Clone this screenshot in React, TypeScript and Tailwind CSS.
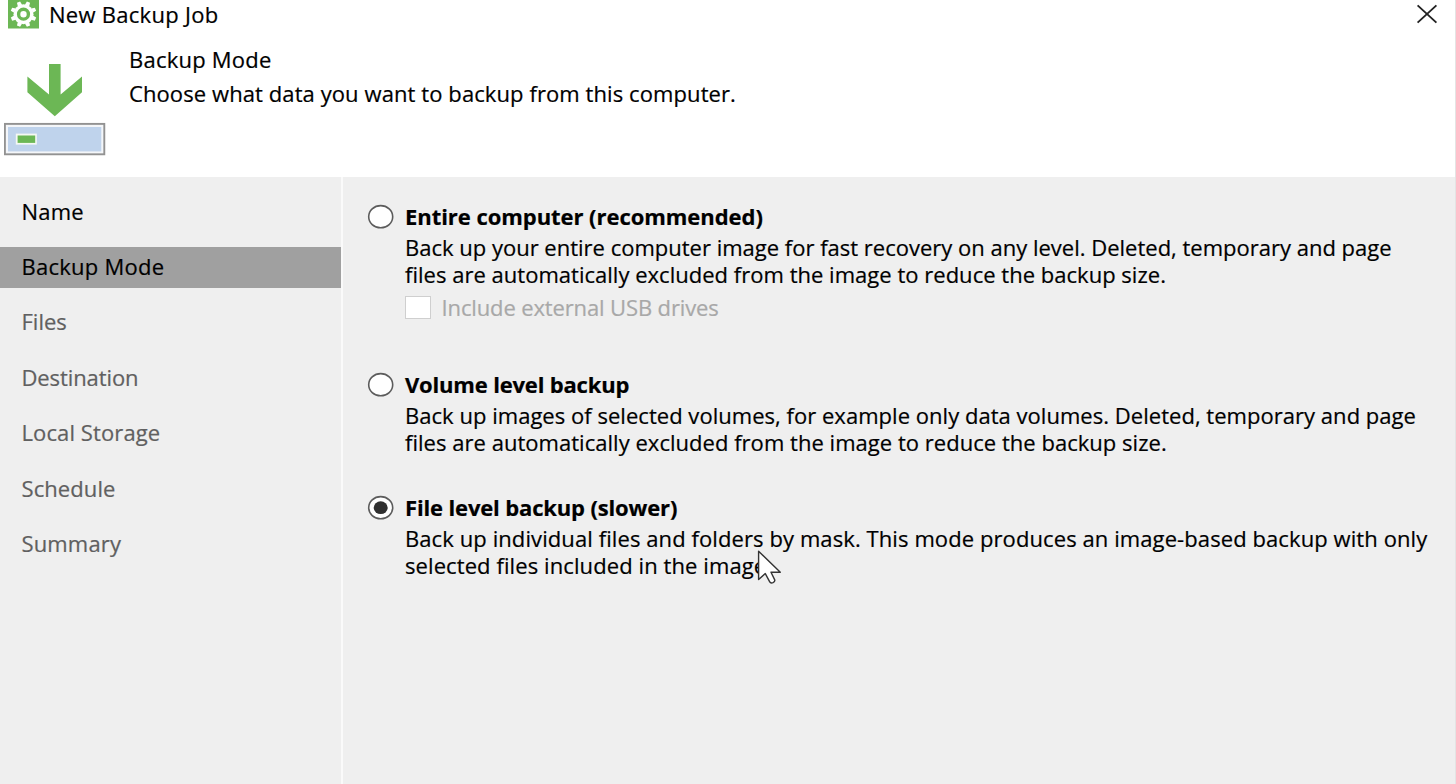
const STEPS = [
  { label: "Name", tone: "text-black tracking-[0.2px]" },
  { label: "Backup Mode", tone: "text-black tracking-[0.25px]", active: true },
  { label: "Files", tone: "text-[#606060] tracking-[0px]" },
  { label: "Destination", tone: "text-[#606060] tracking-[-0.1px]" },
  { label: "Local Storage", tone: "text-[#606060] tracking-[0.1px]" },
  { label: "Schedule", tone: "text-[#606060] tracking-[0.08px]" },
  { label: "Summary", tone: "text-[#606060] tracking-[0.15px]" },
];

const TEETH = [22.5, 67.5, 112.5, 157.5, 202.5, 247.5, 292.5, 337.5];

function GearIcon() {
  return (
    <svg width="31" height="29" viewBox="0 0 31 29" className="block shrink-0">
      <rect width="31" height="28.5" fill="#6cb755" />
      <g fill="#fff">
        {TEETH.map((angle) => (
          <path key={angle} d="M13.2 5 L13.8 1.2 H17.2 L17.8 5Z" transform={`rotate(${angle} 15.5 14.2)`} />
        ))}
        <circle cx="15.5" cy="14.2" r="10" />
      </g>
      <circle cx="15.5" cy="14.2" r="4.9" fill="none" stroke="#6cb755" strokeWidth="3.4" />
    </svg>
  );
}

function BackupIcon() {
  return (
    <svg width="102" height="94" viewBox="4 63 102 94" className="block shrink-0">
      <path d="M49 64 H60.6 V94.4 L82 76.6 V92.3 L54.8 116.2 L27.4 92.3 V76.6 L49 94.4Z" fill="#6cb755" />
      <rect x="4.9" y="123.9" width="99.4" height="30.4" fill="#f4f6f9" stroke="#929292" strokeWidth="1.9" />
      <rect x="8" y="127" width="93.3" height="24.4" fill="#bfd3ec" />
      <rect x="15.8" y="133.6" width="21" height="11" fill="#f5f8f3" />
      <rect x="17.6" y="135.5" width="17.6" height="7.4" fill="#6cb755" />
    </svg>
  );
}

function Radio({ checked = false }: { checked?: boolean }) {
  return (
    <svg width="27" height="25" viewBox="0 0 27 25" className="mt-px block shrink-0">
      <ellipse cx="13.7" cy="12.7" rx="12" ry="11.1" fill="#fff" stroke="#5c5c5c" strokeWidth="1.6" />
      {checked && <ellipse cx="13.7" cy="12.7" rx="7" ry="6.4" fill="#303030" />}
    </svg>
  );
}

export default function App() {
  return (
    <div className="flex h-[784px] w-[1456px] flex-col overflow-hidden border-r border-[#e4e4e4] bg-white font-['Open_Sans','Noto_Sans',sans-serif] text-[22px] text-black [-webkit-text-stroke:0.2px]">
      <header className="flex h-[177px] shrink-0 flex-col">
        <div className="flex h-[36px] items-start pl-2">
          <GearIcon />
          <h1 className="ml-[10px] leading-[29px] tracking-[0.28px]">New Backup Job</h1>
          <svg width="22" height="20" viewBox="0 0 22 20" className="mt-[4px] mr-[17px] ml-auto block">
            <path d="M1.6 1.4 L20.4 18.6 M20.4 1.4 L1.6 18.6" stroke="#222" strokeWidth="1.9" />
          </svg>
        </div>
        <div className="flex pl-1">
          <div className="pt-[27px]">
            <BackupIcon />
          </div>
          <div className="ml-[23px] pt-[6px] leading-[34px]">
            <h2 className="tracking-[0.22px]">Backup Mode</h2>
            <p className="tracking-[0.09px]">Choose what data you want to backup from this computer.</p>
          </div>
        </div>
      </header>

      <div className="flex min-h-0 flex-1 bg-[#efefef]">
        <nav className="w-[343px] shrink-0 border-r-2 border-[#fafafa] pt-[7px]">
          {STEPS.map((step) => (
            <div key={step.label} className="flex h-[55.4px] items-center">
              <div
                className={`flex h-[41px] w-full items-center pb-px pl-[21.5px] ${step.tone} ${step.active ? "bg-[#a0a0a0]" : ""}`}
              >
                {step.label}
              </div>
            </div>
          ))}
        </nav>

        <main className="flex-1 pt-[26px] pl-[24px] whitespace-nowrap">
          <section className="flex h-[168px]">
            <Radio />
            <div className="ml-[11px]">
              <h3 className="leading-[27px] font-bold tracking-[-0.05px]">Entire computer (recommended)</h3>
              <p className="mt-[4px] leading-[26.7px]">
                Back up your entire computer image for fast recovery on any level. Deleted, temporary and page
                <br />
                <span className="tracking-[0.02px]">
                  files are automatically excluded from the image to reduce the backup size.
                </span>
              </p>
              <div className="mt-[5.5px] flex items-center text-[#a8a8a8]">
                <span className="mt-[2px] h-[23px] w-[26px] border-[1.5px] border-[#cfcfcf] bg-white" />
                <span className="ml-[10.5px] pt-px leading-[27px] tracking-[-0.13px]">Include external USB drives</span>
              </div>
            </div>
          </section>

          <section className="flex h-[123px]">
            <Radio />
            <div className="ml-[11px]">
              <h3 className="leading-[27px] font-bold tracking-[-0.18px]">Volume level backup</h3>
              <p className="mt-[4px] leading-[26.7px] tracking-[0.03px]">
                Back up images of selected volumes, for example only data volumes. Deleted, temporary and page
                <br />
                files are automatically excluded from the image to reduce the backup size.
              </p>
            </div>
          </section>

          <section className="flex">
            <Radio checked />
            <div className="ml-[11px]">
              <h3 className="leading-[27px] font-bold tracking-[-0.15px]">File level backup (slower)</h3>
              <div className="relative mt-[4px] leading-[26.7px]">
                <p className="tracking-[0.09px]">
                  Back up individual files and folders by mask. This mode produces an image-based backup with only
                  <br />
                  selected files included in the image.
                </p>
                <svg width="25" height="36" viewBox="757 549 25 36" className="absolute top-[24px] left-[352px]">
                  <path
                    d="M758.6 551.2 V579.6 L765.3 573.6 L769.6 581.6 Q770.6 583.6 773 582.6 Q775.4 581.4 774.6 579.6 L771 572.2 H780.3Z"
                    fill="#fff"
                    stroke="#333"
                    strokeWidth="1.4"
                    strokeLinejoin="round"
                  />
                </svg>
              </div>
            </div>
          </section>
        </main>
      </div>
    </div>
  );
}
